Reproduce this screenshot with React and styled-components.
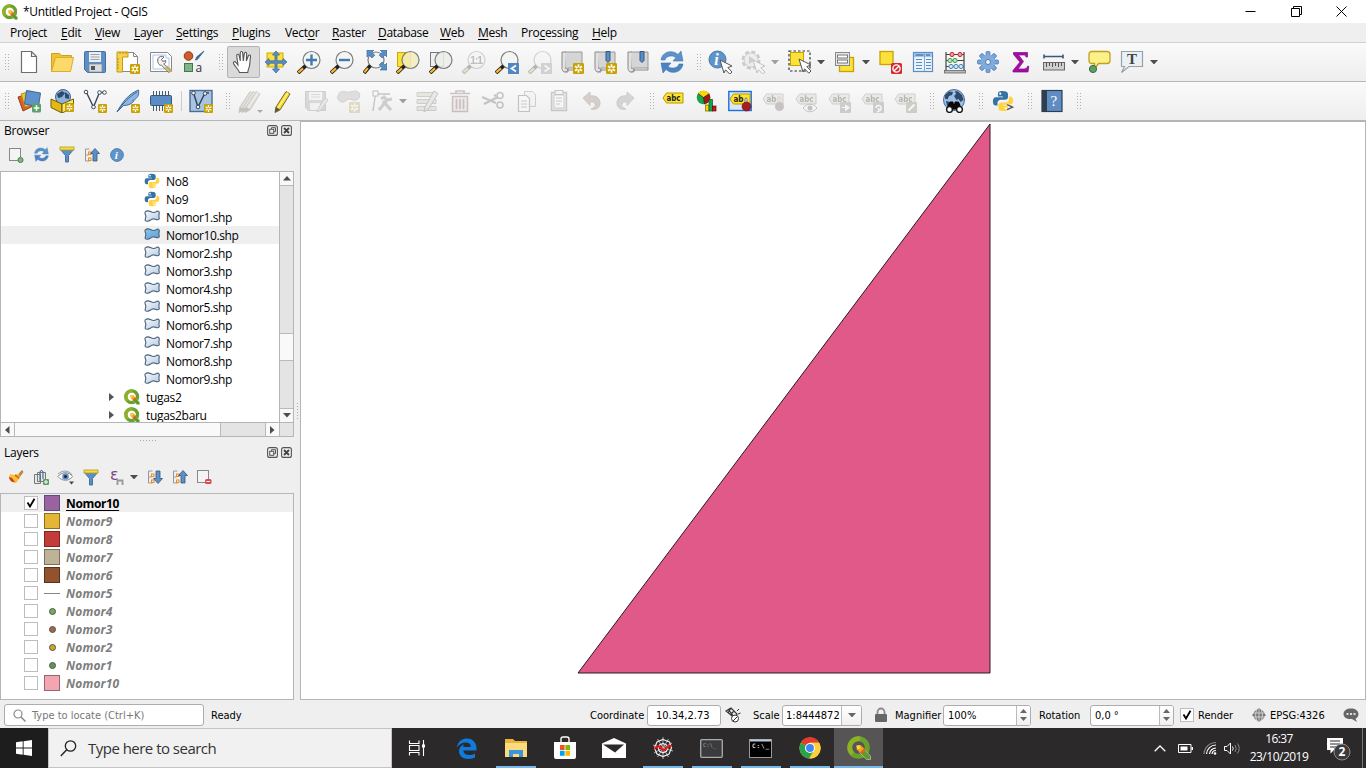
import React from 'react';
import styled, { createGlobalStyle, css } from 'styled-components';

const Global = createGlobalStyle`
  *{box-sizing:border-box}
  html,body{margin:0;padding:0;overflow:hidden;background:#efefef}
  body{font-family:"Open Sans","Noto Sans",sans-serif;font-size:12px;color:#000}
  svg{display:block;flex:none}
`;

/* ---------- frame ---------- */
const Window = styled.div`width:1366px;height:768px;display:flex;flex-direction:column;background:#efefef;overflow:hidden;`;
const TitleBar = styled.header`height:23px;flex:none;display:flex;align-items:center;background:#fff;padding-left:2px;gap:5px;`;
const Text = styled.span`
  white-space:pre;flex:none;display:block;
  width:${p => (p.$w ? p.$w + 'px' : 'auto')};
  letter-spacing:${p => p.$ls || 0}px;
  color:${p => p.$c || 'inherit'};
`;
const WindowButtons = styled.div`margin-left:auto;display:flex;gap:34.500px;padding-right:19px;align-items:center;`;
const MenuBar = styled.nav`height:19px;flex:none;display:flex;align-items:center;gap:14px;padding-left:10px;u{text-underline-offset:2px}`;
const ToolBar = styled.div`
  height:39px;flex:none;display:flex;align-items:center;padding-left:0;
  background:linear-gradient(#fafafa,#eeeeee);border-top:1px solid ${p => p.$top};
`;
const Slot = styled.div`
  width:${p => p.$w || 33}px;height:32px;flex:none;display:flex;align-items:center;justify-content:center;
  opacity:${p => (p.$off ? 0.3 : 1)};filter:${p => (p.$off ? 'grayscale(.5)' : 'none')};
  ${p => p.$on && css`background:#dadada;border:1px solid #b2b2b2;border-radius:2px;`}
`;
const GripBox = styled.div`width:${p => p.$w}px;flex:none;display:flex;justify-content:flex-end;padding-right:${p => p.$pr || 0}px;`;
const GripDots = styled.i`
  display:block;width:6px;height:17px;
  background:radial-gradient(circle at .5px .5px,#b0b0b0 .8px,transparent .9px) 0 0/3px 3px;
`;
const ArrowSlot = styled.div`width:${p => p.$w}px;padding-right:3px;flex:none;display:flex;justify-content:center;opacity:${p => (p.$off ? 0.5 : 1)};`;
const Body = styled.main`flex:1;min-height:0;display:flex;`;
const Docks = styled.aside`width:294px;flex:none;display:flex;flex-direction:column;`;
const TopRule = styled.div`height:1px;flex:none;background:#b5b5b5;`;
const Splitter = styled.div`
  width:6px;flex:none;display:flex;align-items:center;justify-content:center;padding-top:2px;border-top:1px solid #b5b5b5;
`;
const CanvasWrap = styled.div`flex:1;display:flex;border-top:1px solid #b5b5b5;`;
const Canvas = styled.section`flex:1;border:1px solid #b5b5b5;background:#fff;`;

/* ---------- docks ---------- */
const DockHead = styled.div`height:18px;flex:none;display:flex;align-items:center;padding:0 2px 0 4px;justify-content:space-between;`;
const DockButtons = styled.div`display:flex;gap:3px;`;
const DockTools = styled.div`height:32px;flex:none;display:flex;align-items:center;padding-left:3px;padding-bottom:${p => p.$pb || 0}px;`;
const Tree = styled.div`height:${p => p.$h}px;flex:none;border:1px solid #b5b5b5;background:#fff;display:flex;flex-direction:column;`;
const TreeTop = styled.div`display:flex;height:250px;flex:none;`;
const TreeRows = styled.div`flex:1;overflow:hidden;`;
const Row = styled.div`
  height:18px;display:flex;align-items:center;padding-left:${p => p.$pl}px;gap:${p => p.$gap || 5}px;
  background:${p => (p.$sel ? '#efefef' : 'transparent')};
`;
const Raised = styled.div`flex:none;padding-bottom:2px;`;
const Twisty = styled.i`border:4px solid transparent;border-left:5px solid #555;border-right:0;margin-right:5px;`;
const VBar = styled.div`width:14px;flex:none;border-left:1px solid #b5b5b5;background:#e4e4e4;display:flex;flex-direction:column;`;
const HBar = styled.div`height:14px;flex:none;border-top:1px solid #b5b5b5;background:#e4e4e4;display:flex;`;
const ScrollPart = styled.div`
  display:flex;align-items:center;justify-content:center;flex:none;
  background:${p => (p.$track ? '#e4e4e4' : '#f9f9f9')};
  ${p => (p.$v
    ? css`height:${p.$s}px;border-bottom:${p.$last ? 0 : 1}px solid #b9b9b9;`
    : css`width:${p.$s}px;border-right:${p.$last ? 0 : 1}px solid #b9b9b9;`)}
`;
const HSplit = styled.div`height:6px;flex:none;display:flex;align-items:center;justify-content:center;padding-left:3px;`;
const DotLine = styled.i`
  display:block;width:${p => (p.$v ? 1 : 17)}px;height:${p => (p.$v ? 17 : 1)}px;
  background:repeating-linear-gradient(${p => (p.$v ? '180deg' : '90deg')},#aaa 0 1px,transparent 1px 3px);
`;
const Check = styled.div`
  width:14px;height:14px;flex:none;background:#fff;border:1px solid #bdbdbd;display:flex;align-items:center;justify-content:center;
`;
const SymbolCell = styled.div`width:16px;height:18px;flex:none;display:flex;align-items:center;justify-content:center;margin:0 1px;`;
const Swatch = styled.i`width:16px;height:16px;background:${p => p.$c};border:1px solid ${p => p.$b};`;
const Dot = styled.i`width:7px;height:7px;border-radius:50%;background:${p => p.$c};border:1px solid #4f5a4c;`;
const LineSym = styled.i`width:16px;height:1px;background:#7d8b8f;`;
const LayerName = styled.span`
  font-weight:700;font-size:12px;line-height:18px;padding-top:1px;white-space:pre;letter-spacing:${p => (p.$on ? -0.35 : 0.15)}px;
  color:${p => (p.$on ? '#000' : '#7d7d7d')};font-style:${p => (p.$on ? 'normal' : 'italic')};
  text-decoration:${p => (p.$on ? 'underline' : 'none')};text-underline-offset:2px;
`;

/* ---------- status bar ---------- */
const StatusBar = styled.footer`
  height:28px;flex:none;display:flex;align-items:center;padding:2px 0 0 4px;
  font-family:"DejaVu Sans Condensed","DejaVu Sans",sans-serif;font-stretch:condensed;font-size:11px;
`;
const Field = styled.div`
  width:${p => p.$w}px;height:${p => p.$h || 21}px;flex:none;background:#fff;border:1px solid #adadad;border-radius:3px;
  display:flex;align-items:center;padding-left:${p => p.$pl || 4}px;overflow:hidden;
`;
const FieldEnd = styled.div`
  margin-left:auto;width:${p => p.$w}px;height:100%;border-left:1px solid #bbb;background:linear-gradient(#fff,#f0f0f0);
  display:flex;flex-direction:column;gap:4px;align-items:center;justify-content:center;
`;
const Lead = styled.div`margin-left:${p => p.$ml}px;flex:none;display:flex;`;

/* ---------- task bar ---------- */
const TaskBar = styled.footer`height:40px;flex:none;display:flex;background:#2c292b;color:#fff;`;
const Start = styled.div`width:48px;display:flex;align-items:center;justify-content:center;background:#1d1d1d;`;
const Search = styled.div`
  width:344px;background:#f1f1f1;border:1px solid #c4c4c4;display:flex;align-items:center;padding-left:11px;gap:11px;
  color:#333;font-size:15px;margin-right:1px;
`;
const Task = styled.div`
  width:49px;display:flex;align-items:center;justify-content:center;
  background:${p => (p.$active ? '#575456' : 'transparent')};
  box-shadow:${p => (p.$active ? 'inset 0 -2px #76b9ed' : 'none')};
  ${p => p.$run && css`background:linear-gradient(#76b9ed,#76b9ed) center bottom/40px 2px no-repeat;`}
`;
const Tray = styled.div`margin-left:auto;display:flex;align-items:center;padding-right:3px;`;
const Clock = styled.div`
  width:64px;margin:0 14px 0 6px;display:flex;flex-direction:column;align-items:center;line-height:18px;font-size:12px;padding-bottom:1px;
`;
const ShowDesk = styled.i`width:1px;height:40px;background:#7b797a;margin-left:11px;`;

/* ---------- icon helpers ---------- */
const I = ({ w = 24, h = w, vb, children, ...r }) => (
  <svg width={w} height={h} viewBox={vb || `0 0 ${w} ${h}`} fill="none" {...r}>{children}</svg>
);
const Tri = ({ d = 'down', w = 8, c = '#4d4d4d' }) => {
  const path = { down: 'M0 0h8L4 4.5z', up: 'M0 4.5h8L4 0z', left: 'M4.5 0v8L0 4z', right: 'M0 0v8l4.500-4z' }[d];
  const flat = d === 'down' || d === 'up';
  return <svg width={flat ? w : w * 0.6} height={flat ? w * 0.6 : w} viewBox={flat ? '0 0 8 4.800' : '0 0 4.800 8'}><path d={path} fill={c} /></svg>;
};
const Badge = ({ x = 14, y = 14, s = 10 }) => (
  <g transform={`translate(${x} ${y}) scale(${s / 10})`}>
    <rect width="10" height="10" rx="1.200" fill="#c9a200" />
    <path d="M5 1.200v7.600M1.800 3l6.400 4M8.200 3L1.800 7" stroke="#fff" strokeWidth="1.500" />
    <circle cx="5" cy="5" r="1.200" fill="#c9a200" />
  </g>
);
const Mag = ({ cx = 14.5, cy = 10, r = 8.5, fill = '#f2f4f2', children }) => (
  <>
    <circle cx={cx} cy={cy} r={r} fill={fill} fillOpacity=".85" stroke="#7c7c7c" strokeWidth="1.200" />
    <path d={`M${cx - r * 0.7} ${cy + r * 0.7}L1 23`} stroke="#222" strokeWidth="3.800" />
    <path d={`M${cx - r * 0.7 - 2.5} ${cy + r * 0.7 + 2.5}L1.400 22.400`} stroke="#fcb827" strokeWidth="2.200" />
    {children}
  </>
);
const Cursor = ({ x = 12, y = 9 }) => (
  <path transform={`translate(${x} ${y})`} d="M0 0l12 6-4.200 1.600 4.200 4.400-2.200 2.200-4.200-4.400L4 13z" fill="#fff" stroke="#555" />
);
const Tag = ({ t = 'abc', y = 6, fill = '#ffe62e', stroke = '#b99600' }) => (
  <>
    <path d={`M2 ${y + 5}l3.500-5H22v10H5.500z`} fill={fill} stroke={stroke} />
    <text x="5.500" y={y + 8} fontSize="8" fontWeight="700" fontFamily="DejaVu Sans" fill="#222" textLength={t === 'abc' ? 14 : 10} lengthAdjust="spacingAndGlyphs">{t}</text>
  </>
);
const Scroll = () => (
  <>
    <path d="M4 2h17v16H7v4H4z" fill="#d5d5d5" stroke="#999" />
    <path d="M4 18c4 0 3 4 0 4-3 0-3-4-3-4V2h4" fill="#e2e2e2" stroke="#888" />
    <path d="M6 20h15v-2" stroke="#888" />
  </>
);
const Pencil = ({ c = '#f3d92f', x = 0 }) => (
  <g transform={`translate(${x} 0)`}>
    <path d="M5 18L15 2.500l4 2.500L9 21l-5 2.500z" fill={c} stroke="#7c6a20" />
    <path d="M7 19L17 3.600" stroke="#fff7a0" strokeWidth="1.200" />
    <path d="M4.800 18L4 23.500l5-3z" fill="#555" />
  </g>
);
const Python = ({ s = 16, prompt }) => (
  <I w={s} vb="0 0 24 24">
    <path d="M11.500 1c-5 0-5 2-5 3.500V7H12v1H4C2 8 1 10 1 12.500S2 17 4 17h2v-3c0-2 1.500-3.500 3.500-3.500h5c1.500 0 3-1.200 3-3v-3C17.500 2 15 1 11.500 1z" fill="#3673a5" />
    <path d="M12.500 23c5 0 5-2 5-3.500V17H12v-1h8c2 0 3-2 3-4.500S22 7 20 7h-1.500v3c0 2-1.500 3.500-3.500 3.500h-5c-1.500 0-3 1.200-3 3v3c0 2.500 2 3.500 5.500 3.500z" fill="#ffd23e" />
    <circle cx="9" cy="4" r="1.200" fill="#fff" /><circle cx="15" cy="20" r="1.200" fill="#fff" />
    {prompt && <path d="M16.500 16l6 2.700-6 2.700" stroke="#f2f2f2" strokeWidth="3.200" />}
    {prompt && <path d="M16.500 16l6 2.700-6 2.700" stroke="#555" strokeWidth="1.500" />}
  </I>
);
const QLogo = ({ s = 16 }) => (
  <I w={s} vb="0 0 24 24">
    <circle cx="11.500" cy="11.500" r="8.800" stroke="#6aa02c" strokeWidth="5" />
    <path d="M5.500 18a8.800 8.800 0 0 1 0-12.800A8.800 8.800 0 0 1 13 2.800" stroke="#8fb128" strokeWidth="4.600" />
    <path d="M12.500 16.500l3.800-4.200 7.200 7.700v3.500h-4z" fill="#5c9a30" stroke="#fff" strokeOpacity=".5" strokeWidth=".8" />
    <path d="M9.500 9.500l4-.4 3.600 3.300-4.200 4.200-3.200-3.400z" fill="#f5a21b" />
    <path d="M9.500 9.500l3.200 0 1 3-3.600.5z" fill="#fbd34a" />
    <path d="M12.900 16.600l4.200-4.200 1.600 1.700-4.200 4.200z" fill="#e5621a" />
  </I>
);
const Shp = ({ blue }) => (
  <I w={16} h={12}>
    <defs>
      <linearGradient id={blue ? 'shpB' : 'shpW'} x1="0" y1="0" x2="1" y2="1">
        <stop offset="0" stopColor={blue ? '#8cc4ec' : '#f6f8fa'} /><stop offset="1" stopColor={blue ? '#5c9fd6' : '#b4cbe4'} />
      </linearGradient>
    </defs>
    <path d="M1.300 1.800C3 .4 5 .8 7 1.800s3.800 1.100 5.600-.5c2-.6 3 .4 2.600 2.400S14.700 6.800 15.300 8.300c-.3 1.900-2.300 1.700-3.900 1S8 8.500 6.200 10.300c-1.700 1.200-4.200 1.300-5 .2-.3-1.600.8-3 .6-4.500S.3 3.200 1.300 1.800z" fill={`url(#${blue ? 'shpB' : 'shpW'})`} stroke="#4a6078" strokeWidth="1.100" />
  </I>
);
const Refresh = ({ s = 24 }) => (
  <I w={s} vb="0 0 24 24">
    <path d="M1 10C2 3 9 0 15 2.500l3 2L21 1l2 10H13l3-3.500C12 4.500 6 6 5 10z" fill="#5a93cc" stroke="#3f76b0" strokeWidth=".6" />
    <path d="M23 14c-1 7-8 10-14 7.500l-3-2L3 23 1 13h10l-3 3.500c4 3 10 1.500 11-2.500z" fill="#4b84c2" stroke="#3f76b0" strokeWidth=".6" />
  </I>
);
const Funnel = () => (
  <I w={16} h={17}>
    <path d="M1 3l5.500 6.500V16h3V9.500L15 3z" fill="#5b8fc6" stroke="#44729f" />
    <rect x="1" y="1" width="14" height="3" fill="#f5dc3c" stroke="#b59f1c" strokeWidth=".8" />
  </I>
);
const Info = ({ s = 14 }) => (
  <I w={s} vb="0 0 16 16">
    <circle cx="8" cy="8" r="7.300" fill="#5f94cb" stroke="#4a78a8" />
    <text x="5.400" y="12.500" fontSize="13" fontStyle="italic" fontWeight="700" fontFamily="Liberation Serif" fill="#fff">i</text>
  </I>
);
const Collapse = ({ down }) => (
  <I w={16}>
    <path d="M5.500 2H1.500v12h4M1.500 8h3" stroke="#999" />
    <rect x="4.500" y="5" width="2.500" height="2.500" stroke="#f08a1c" /><rect x="4.500" y="11" width="2.500" height="2.500" stroke="#f08a1c" />
    <path transform={down ? 'rotate(180 11 8)' : undefined} d="M11 1.500l4.500 5H13V14H9V6.500H6.500z" fill="#5b8fc6" stroke="#31587f" strokeWidth=".8" />
  </I>
);
const Globe = ({ dark = '#2c4a6d', sea = '#9dbfe4', s = 24, children }) => (
  <I w={s} vb="0 0 24 24">
    <circle cx="12" cy="11" r="10.500" fill={sea} stroke="#4a6d94" />
    <path d="M3 6l4-3.500 4 .5-1 3-3 1-1.500 3.500-2.500-1zM13 2l3 .5 4 3.500 1.500 5-3 2-2-3-2 1-2.500-4 2-2zM4 12l4 1 2 3-2 3-3-2z" fill={dark} />
    {children}
  </I>
);

/* ---------- toolbar icons ---------- */
const ic = {
  newp: <I><path d="M4.500 1.500h10l5 5v16h-15zM14.500 1.500v5h5" fill="#fff" stroke="#6d6d6d" strokeWidth="1.200" /></I>,
  open: <I><path d="M1.500 3.500h8l2 2h10v4H5l-3.500 12z" fill="#eec232" stroke="#d0a11c" /><path d="M5.500 7.500h18l-3 14H1.500z" fill="#fcd968" stroke="#d9ae2b" /></I>,
  save: <I><path d="M2.500 1.500h19q1 0 1 1v19q0 1-1 1h-17l-3-3v-17q0-1 1-1z" fill="#5d8fc6" stroke="#446e9d" /><rect x="6" y="2" width="12" height="10" fill="#eceff1" /><path d="M7.500 4.500h9M7.500 7h9M7.500 9.500h9" stroke="#9aa4ad" /><rect x="6" y="14" width="13" height="8" fill="#d8dde1" stroke="#7b8791" strokeWidth=".7" /><rect x="8" y="16" width="4" height="4" fill="#555" /></I>,
  layout: <I><path d="M2.500 2.500h15l4 4v15h-19z" fill="#fff" stroke="#888" /><path d="M17.500 2.500v4h4" stroke="#888" /><path d="M1 2h11v5H6.500v15H1z" fill="#f7d24e" stroke="#c79c11" /><path d="M4 2v2M7 2v2M10 2v2M1 9h2M1 12h2M1 15h2M1 18h2" stroke="#a07d08" strokeWidth=".8" /><Badge /></I>,
  manager: <I><path d="M1.500 2.500h17l4 4v15h-21z" fill="#fff" stroke="#888" /><path d="M4 5h13v3h3v11H4z" stroke="#a9c5ea" /><path d="M9 8.500a4.200 4.200 0 0 1 6-1.500l-2.500 2.500 1.200 2 3-1c.3 2-.7 3.200-2 3.500l7.300 6.500-2 2-7.500-7.200c-2.500.3-4.500-2.800-3.500-6.800z" fill="#f3f3f3" stroke="#666" /><path d="M17 16.500l5.500 5" stroke="#c9ab54" strokeWidth="3" /></I>,
  style: <I><circle cx="6.500" cy="6" r="4.300" fill="#cf5b2d" stroke="#8d3414" /><path d="M13.500 10c2-.3 2.500-1 3-2l5.500-7-6 5c-2 .5-1.500 2.500-2.500 4z" fill="#3d6a9a" stroke="#3d6a9a" /><rect x="2.500" y="13.500" width="8" height="8" fill="#7fb48a" stroke="#3f7a4c" /><text x="13.500" y="21.500" fontSize="12" fontFamily="Open Sans" fill="#333">a</text></I>,
  pan: <I><path d="M8.500 22.500c-1-3-4.500-6-6-9-.6-2 1.200-2.500 2.500-1l2 2.500L5.700 6c0-2.200 2-2.200 2.500-.2L9.300 11 9.200 3c.2-2 2.300-2 2.500 0l.6 8 1-7.500c.5-2 2.500-1.500 2.400.3L15.300 11l2-5c.8-1.700 2.500-1 2.200.8-.6 3.500-.5 6-1 9-.4 2.500-1.700 4-1.700 6.700z" fill="#fff" stroke="#555" strokeWidth="1.100" /></I>,
  pansel: <I><rect x="3" y="3" width="16" height="14" fill="#fbe23b" stroke="#d2a800" /><path d="M12 1l3.500 4H13v5.800h6V8.500l4 3.500-4 3.500v-2.300h-6V19h2.500L12 23l-3.500-4H11v-5.800H5v2.300L1 12l4-3.500v2.300h6V5H8.500z" fill="#5a8dc6" stroke="#41709f" strokeWidth=".8" /></I>,
  zin: <I><Mag><path d="M14.500 4.500v11M9 10h11" stroke="#4379b3" strokeWidth="2.400" /></Mag></I>,
  zout: <I><Mag><path d="M9 10h11" stroke="#4379b3" strokeWidth="2.400" /></Mag></I>,
  zfull: <I><Mag cx={13} cy={10} r={8}><path d="M4 0h7L8.800 2.200l3 3-2.800 2.800-3-3L4 7zM24 0h-7l2.200 2.200-3 3L19 8l3-3 2 2zM24 20h-7l2.200-2.200-3-3L19 12l3 3 2-2z" fill="#5a8dc6" stroke="#41709f" strokeWidth=".7" /></Mag></I>,
  zsel: <I><rect x="1.500" y="2.500" width="13" height="14" fill="#fbe23b" stroke="#d2a800" /><Mag fill="#f1ecc0" /></I>,
  zlayer: <I><rect x="1.500" y="2.500" width="13" height="14" fill="#f0f0f0" stroke="#777" /><Mag fill="#ebede8" /></I>,
  znat: <I><Mag><text x="8" y="14" fontSize="11" fontWeight="700" fontFamily="Liberation Sans" fill="#444" textLength="13">1:1</text></Mag></I>,
  zlast: <I><Mag /><rect x="13" y="13" width="11" height="11" fill="#4f87c3" /><path d="M21 15.500l-4.500 3 4.500 3" stroke="#fff" strokeWidth="1.800" /></I>,
  znext: <I><Mag /><rect x="13" y="13" width="11" height="11" fill="#888" /><path d="M16.500 15.500l4.500 3-4.500 3" stroke="#fff" strokeWidth="1.800" /></I>,
  book: <I><Scroll /><Badge x={12} y={13} s={11} /></I>,
  book2: <I><Scroll /><path d="M12 1.500h4v9l-2 2-2-2z" fill="#5a8dc6" stroke="#31587f" /><Badge x={12} y={13} s={11} /></I>,
  book3: <I><Scroll /><path d="M13 1.500h4v9l-2 2-2-2z" fill="#5a8dc6" stroke="#31587f" /></I>,
  ident: <I><circle cx="9.500" cy="9.500" r="8.500" fill="#5f94cb" stroke="#4a78a8" /><text x="6.200" y="15" fontSize="16" fontStyle="italic" fontWeight="700" fontFamily="Liberation Serif" fill="#fff">i</text><Cursor x={12} y={10} /></I>,
  action: <I><circle cx="10" cy="10" r="8" stroke="#666" strokeWidth="3" strokeDasharray="4 2.300" /><circle cx="10" cy="10" r="7" fill="#ddd" stroke="#777" /><path d="M8 6l6 4-6 4z" fill="#777" /><Cursor x={12} y={10} /></I>,
  select: <I><rect x="1" y="1" width="21" height="20" stroke="#333" strokeDasharray="2.500 2" strokeWidth="1.200" /><rect x="2.500" y="2.500" width="13" height="13" fill="#fbe23b" stroke="#c9a200" /><Cursor x={11} y={9} /></I>,
  selval: <I w={23} h={24}><rect x="5.500" y="7.500" width="14" height="14" fill="#fbe23b" stroke="#c9a200" strokeWidth="1.300" /><rect x="1.500" y="2.500" width="14" height="13" fill="#e8e8e8" stroke="#888" /><rect x="3.500" y="5" width="10" height="3" fill="#fff" stroke="#777" /><rect x="3.500" y="10" width="10" height="3" fill="#fff" stroke="#777" /></I>,
  desel: <I><rect x="2" y="1.500" width="13" height="13" fill="#fbe23b" stroke="#c9a200" strokeWidth="1.300" /><rect x="13" y="13" width="11" height="11" rx="1.500" fill="#d7282f" /><circle cx="18.500" cy="18.500" r="3.600" stroke="#fff" strokeWidth="1.400" /><path d="M21 16l-5 5" stroke="#fff" strokeWidth="1.400" /></I>,
  table: <I><rect x="2.500" y="2.500" width="19" height="19" fill="#eaf2fa" stroke="#5a8dc6" strokeWidth="1.200" /><rect x="3" y="3" width="18" height="4" fill="#a4c5e8" /><path d="M4.500 5h8M15 5h4" stroke="#4a7db6" strokeWidth="1.400" /><path d="M13.500 3v18" stroke="#7faad6" /><path d="M5 9.500h6M5 12.500h6M5 15.500h6M5 18.500h6M15 9.500h5M15 12.500h5M15 15.500h5M15 18.500h5" stroke="#5a8dc6" /></I>,
  abacus: <I><path d="M3 2v19M21 2v19M3 4.500h18M3 10.500h18M3 16.500h18" stroke="#444" strokeWidth="1.200" /><rect x="1.500" y="20.500" width="21" height="2.500" fill="#bbb" stroke="#666" strokeWidth=".8" />{[[9, 4.5, '#f09a9a', '#c0282c'], [17, 4.5, '#f09a9a', '#c0282c'], [7, 10.5, '#bfe3bf', '#3c9c48'], [12, 10.5, '#bfe3bf', '#3c9c48'], [8, 16.5, '#d2e6f6', '#4382b5'], [13, 16.5, '#d2e6f6', '#4382b5'], [18, 16.5, '#d2e6f6', '#4382b5']].map(([x, y, f, s], i) => <circle key={i} cx={x} cy={y} r="2.100" fill={f} stroke={s} />)}</I>,
  gear: <I>{[0, 45, 90, 135].map(a => <rect key={a} x="10" y="1.500" width="4" height="21" rx="1" transform={`rotate(${a} 12 12)`} fill="#7aa5d8" stroke="#4a7db6" strokeWidth=".8" />)}<circle cx="12" cy="12" r="7" fill="#82abdc" /><circle cx="12" cy="12" r="2.500" fill="#f4f4f4" stroke="#4a7db6" /></I>,
  sigma: <I><path d="M4.500 2.500h14v4.500h-1.500c-.3-1.700-1-2-2.500-2H9.500l5 6.500-5.500 7.500h6c2 0 3-.8 3.500-2.700h1.300l-.8 5.700H4v-1.500l7-8.500-6.500-7.500z" fill="#a70ca7" stroke="#7e087e" strokeWidth=".7" /></I>,
  ruler: <I><path d="M2 6.500h19M2 4.500v4M21 4.500v4" stroke="#36597f" strokeWidth="1.600" /><rect x="1.500" y="12.500" width="21" height="7.500" fill="#cfcfcf" stroke="#666" /><path d="M4.500 13v4M7.500 13v3M10.500 13v4M13.500 13v3M16.500 13v4M19.500 13v3" stroke="#555" /></I>,
  tip: <I><path d="M5 1.500h15q3 0 3 3v6q0 3-3 3h-8.500l-4 5.500v-5.500H5q-3 0-3-3v-6q0-3 3-3z" fill="#fcf08b" stroke="#c3a01a" strokeWidth="1.300" /><circle cx="6" cy="19" r="3.600" fill="#5f9e67" stroke="#3d6b43" /></I>,
  text: <I><path d="M1.500 1.500h21v15H9l-7.500 6 3-6h-3z" fill="#e9f1f6" stroke="#9aa1a6" strokeWidth="1.200" /><text x="7" y="14" fontSize="15" fontFamily="Liberation Serif" fontWeight="700" fill="#444">T</text></I>,

  dsm: <I><path d="M1 8l10-3 5 12-10 5z" fill="#d9622c" stroke="#9c3d12" /><path d="M4 5l10-3 4 13-10 3z" fill="#f0c431" stroke="#b98f0f" /><path d="M9.500 1.500l14 2.500-2 13.500-14-2.500z" fill="#5f92ca" stroke="#3c6797" /><rect x="15" y="14.500" width="9" height="9" rx="1.500" fill="#5aa06a" /><path d="M19.500 16.200v5.600M16.700 19h5.600" stroke="#fff" strokeWidth="1.600" /></I>,
  geo: <I><circle cx="13" cy="8" r="7.500" fill="#8db2dc" stroke="#3f648d" /><path d="M7 5l5-3 3 2-3 4-4 1zM15 3l4 3v4l-4-1z" fill="#2c4a6d" /><path d="M1 10l11 5v9L1 18.500z" fill="#e3b912" stroke="#6f5a06" /><path d="M12 15l11.500-5v8.500L12 24z" fill="#fbe96e" stroke="#6f5a06" /><Badge x={15} y={14} s={9} /></I>,
  vnew: <I><path d="M3.500 3.500L10.500 18l6-14.500h5" stroke="#3a4a5c" strokeWidth="1.400" /><g fill="#fff" stroke="#3a4a5c"><circle cx="3" cy="3" r="1.800" /><circle cx="10.500" cy="18" r="1.800" /><circle cx="16.500" cy="3.500" r="1.800" /><circle cx="21.500" cy="3.500" r="1.800" /></g><Badge x={15} y={15} s={9} /></I>,
  feather: <I><path d="M1 23C6 14 12 5 22.500 1c1 6-2 8-4 10l-2 .5 1 1c-3 3-6 4-10 4z" fill="#8db6e2" stroke="#3e6a9a" /><path d="M1 23C7 14 13 8 21 3" stroke="#3e6a9a" /><Badge x={15} y={15} s={9} /></I>,
  chip: <I><path d="M4.500 2v20M7.500 2v20M10.500 2v20M13.500 2v20M16.500 2v20M19.500 2v20" stroke="#4c5a68" /><rect x="1.500" y="6.500" width="21" height="10" rx="1" fill="#5a8dc6" stroke="#31587f" /><Badge x={15} y={15} s={9} /></I>,
  virt: <I><rect x="1" y="1.500" width="22" height="21" fill="#a9c4e2" stroke="#4c6d92" strokeWidth="1.400" /><path d="M4.500 4L9 18l7-14h4" stroke="#33485f" strokeWidth="1.500" /><g fill="#fff" stroke="#33485f"><circle cx="4.500" cy="4" r="1.800" /><circle cx="9" cy="18" r="1.800" /><circle cx="16" cy="4.500" r="1.800" /></g><Badge x={15} y={15} s={9} /></I>,
  pencils: <I w={26} h={24}><Pencil x={-3} c="#999" /><Pencil x={0} c="#aaa" /><Pencil x={3} c="#aaa" /><path d="M19 21h6l-3 3z" fill="#111" /></I>,
  pencil: <I><Pencil /></I>,
  saveedit: <I><path d="M1.500 2.500h20v19h-17l-3-3z" fill="#9a9a9a" stroke="#777" /><rect x="5" y="3" width="13" height="8" fill="#f1f1f1" /><path d="M7 5.500h9M7 8h9" stroke="#999" /><rect x="6" y="14" width="10" height="7" fill="#eee" /><path d="M14 20l7-11 3 2-7 10-4 2z" fill="#ccc" stroke="#777" /></I>,
  addpoly: <I><path d="M1 7c1-5 5-5 8-4s7-1 10-1c5 1 5 8 0 9-3 1-4-1-7-1s-3 3-6 3c-4 0-6-3-5-6z" fill="#aaa" stroke="#777" /><Badge x={12} y={13} s={11} /></I>,
  vertex: <I><path d="M3 22L5.500 5H20" stroke="#555" strokeWidth="1.300" /><rect x="3" y="2" width="5" height="5" fill="#fff" stroke="#444" /><path d="M9 21l9-11M11 10l3-2 3 3 5-1M13 12l8 9" stroke="#777" strokeWidth="3" /></I>,
  modify: <I><path d="M2 3.500h19v4H2zM2 10.500h19v4H2zM2 17.500h19v4H2z" fill="#cfc488" stroke="#777" /><path d="M10 18L19 2l4 2.500L13.500 20l-4.500 3z" fill="#ccc" stroke="#555" /></I>,
  trash: <I><path d="M4.500 7.500h15v15h-15z" fill="#e9cfcf" stroke="#8c4444" strokeWidth="1.500" /><path d="M2 4.500h20M8 4V2h8v2M8.500 10v10M12 10v10M15.500 10v10" stroke="#8c4444" strokeWidth="1.700" /></I>,
  cut: <I><path d="M1 8l14 6M3 15l14-7M13 6l2 1" stroke="#555" strokeWidth="2" /><circle cx="19" cy="6.500" r="3" stroke="#555" strokeWidth="1.600" /><circle cx="19" cy="16" r="3" stroke="#555" strokeWidth="1.600" /></I>,
  copy: <I><path d="M10.500 2.500h8l3 3v12h-11z" fill="#eee" stroke="#777" /><path d="M4.500 6.500h8l3 3v13h-11z" fill="#fff" stroke="#555" strokeWidth="1.200" /><path d="M7 12h6M7 15h6M7 18h6" stroke="#666" /></I>,
  paste: <I><path d="M4.500 3.500h15v18h-15z" fill="#ccc" stroke="#666" strokeWidth="1.500" /><path d="M7 6h10v13H7z" fill="#fff" stroke="#777" /><rect x="8" y="1.500" width="8" height="4" fill="#eee" stroke="#555" /><path d="M9 9h6M9 12h6M9 15h4" stroke="#666" /></I>,
  undo: <I><path d="M3 9l7-6v4c7-1 10 3 10 7 0 5-4 7-9 6 3-1 5-3 4-5-.6-2-2-2.500-5-2v3.500z" fill="#a2775f" stroke="#7e5942" /></I>,
  redo: <I><path d="M21 9l-7-6v4C7 6 4 10 4 14c0 5 4 7 9 6-3-1-5-3-4-5 .6-2 2-2.500 5-2v3.500z" fill="#80957f" stroke="#5f755e" /></I>,
  abc: <I><Tag y={4} /></I>,
  pie: <I><circle cx="8.500" cy="8.500" r="6.800" fill="#19a34a" /><path d="M8.500 8.500L3 4.500a6.800 6.800 0 0 1 11.200.5z" fill="#ffd500" /><path d="M8.500 8.500L14.200 4.800a6.800 6.800 0 0 1-4.500 10.400z" fill="#a31616" /><path d="M8.500 8.500L3 4.500M8.500 8.500l5.700-3.700M8.500 8.500l1 6.700" stroke="#222" strokeWidth=".7" /><rect x="10.500" y="16" width="3.500" height="6" fill="#ffd500" stroke="#7d6900" strokeWidth=".7" /><rect x="14" y="10.500" width="3.500" height="11.500" fill="#19a34a" stroke="#0d5626" strokeWidth=".7" /><rect x="17.500" y="17" width="3.500" height="5" fill="#c41c1c" stroke="#5f0d0d" strokeWidth=".7" /></I>,
  hilite: <I><rect x=".8" y="2.500" width="22.400" height="19" fill="#dbe7f6" stroke="#1a6fe0" strokeWidth="1.400" /><Tag y={5} t="ab" /><path d="M17 15V9.500q1-1.500 2 0V15" fill="#fff" stroke="#777" /><circle cx="18.500" cy="17.500" r="4.500" fill="#a31f1f" stroke="#6e1010" strokeWidth=".6" /></I>,
  pin: <I><Tag y={5} t="ab" fill="#d5cfae" stroke="#777" /><path d="M17 15V8.500q1-1.500 2 0V15" fill="#fff" stroke="#777" /><circle cx="18.500" cy="17.500" r="4.500" fill="#7c4f4f" /></I>,
  show: <I><Tag y={5} fill="#d5cfae" stroke="#777" /><path d="M9 19c4-5 10-5 14 0-4 5-10 5-14 0z" fill="#fff" stroke="#555" /><circle cx="16" cy="19" r="2.500" fill="#456" /></I>,
  move: <I><Tag y={5} fill="#d5cfae" stroke="#777" /><rect x="13" y="13" width="11" height="11" rx="1" fill="#777" /><path d="M14.500 18.500h4V16l4 2.700-4 2.800v-3" fill="#fff" stroke="#fff" /></I>,
  rot: <I><Tag y={5} fill="#d5cfae" stroke="#777" /><rect x="13" y="13" width="11" height="11" rx="1" fill="#777" /><path d="M16 19a2.600 2.600 0 1 1 3.500 2.500M17 23l3-1.500-2-2" stroke="#fff" strokeWidth="1.500" /></I>,
  chg: <I><Tag y={5} fill="#d5cfae" stroke="#777" /><rect x="13" y="13" width="11" height="11" rx="1" fill="#807a50" /><path d="M15.500 21.500l6-6" stroke="#fff" strokeWidth="2" /></I>,
  meta: <Globe><path d="M5 20l3-7h3v2h2v-2h3.500l3 7z" fill="#0a0a0a" stroke="#000" /><circle cx="7.500" cy="20.500" r="2.900" fill="#fff" stroke="#111" strokeWidth="1.400" /><circle cx="17.500" cy="20.500" r="2.900" fill="#fff" stroke="#111" strokeWidth="1.400" /></Globe>,
  help: <I><rect x="2" y="1.500" width="20" height="21" fill="#5f8dc3" stroke="#2c3e50" strokeWidth="1.200" /><rect x="2" y="1.500" width="5" height="21" fill="#2c3e50" /><text x="10.500" y="17" fontSize="15" fontFamily="Liberation Serif" fill="#fff">?</text></I>,
};

/* a name ending in "!" is a disabled tool */
const Tool = ({ name, on, w }) => {
  const off = name.endsWith('!');
  return <Slot $off={off} $on={on} $w={w}>{ic[off ? name.slice(0, -1) : name]}</Slot>;
};
const Grip = ({ w, pr }) => <GripBox $w={w} $pr={pr}><GripDots /></GripBox>;
const Drop = ({ w, off }) => <ArrowSlot $w={w} $off={off}><Tri w={8} /></ArrowSlot>;
const Tools = ({ names }) => names.split(' ').map(n => <Tool key={n} name={n} />);

const menus = [['Pro|j|ect', 37], ['|E|dit', 20], ['|V|iew', 25], ['|L|ayer', 28], ['|S|ettings', 42], ['|P|lugins', 39], ['Vect|o|r', 33], ['|R|aster', 32], ['|D|atabase', 48], ['|W|eb', 24], ['|M|esh', 29], ['Pro|c|essing', 57], ['|H|elp', 26]];

const files = ['Nomor1', 'Nomor10', 'Nomor2', 'Nomor3', 'Nomor4', 'Nomor5', 'Nomor6', 'Nomor7', 'Nomor8', 'Nomor9'];
const layers = [
  ['Nomor10', <Swatch $c="#9b62a2" $b="#5a4c78" />, true], ['Nomor9', <Swatch $c="#e5b636" $b="#8d6f22" />], ['Nomor8', <Swatch $c="#c43c39" $b="#7b2624" />],
  ['Nomor7', <Swatch $c="#beb297" $b="#777060" />], ['Nomor6', <Swatch $c="#91522d" $b="#57311b" />], ['Nomor5', <LineSym />],
  ['Nomor4', <Dot $c="#74ab5c" />], ['Nomor3', <Dot $c="#a3654a" />], ['Nomor2', <Dot $c="#d1a42c" />], ['Nomor1', <Dot $c="#63935b" />],
  ['Nomor10', <Swatch $c="#f3a6b2" $b="#98666e" />],
];

const DockHeader = ({ title, ls }) => (
  <DockHead>
    <Text $ls={ls}>{title}</Text>
    <DockButtons>
      <I w={11}><rect x=".6" y=".6" width="9.800" height="9.800" rx="2" stroke="#555" strokeWidth="1.100" /><rect x="2.700" y="4.300" width="4" height="4" stroke="#555" /><path d="M4.500 4V2.700h4v4H7" stroke="#555" /></I>
      <I w={11}><rect x=".6" y=".6" width="9.800" height="9.800" rx="2" stroke="#555" strokeWidth="1.100" /><path d="M3 3l5 5M8 3L3 8" stroke="#444" strokeWidth="1.900" /></I>
    </DockButtons>
  </DockHead>
);

const BrowserPanel = () => (
  <>
    <DockHeader title="Browser" ls={-0.2} />
    <DockTools $pb={1}>
      <Slot $w={25}><I w={16}><rect x="1.500" y="1.500" width="11" height="12" fill="#f4f4f4" stroke="#888" /><circle cx="12.500" cy="13" r="2.600" fill="#7db386" stroke="#4a8a57" /></I></Slot>
      <Slot $w={26}><Refresh s={15} /></Slot>
      <Slot $w={25}><Funnel /></Slot>
      <Slot $w={26}><Collapse /></Slot>
      <Slot $w={24}><Info s={14} /></Slot>
    </DockTools>
    <Tree $h={266}>
      <TreeTop>
        <TreeRows>
          {['No8', 'No9'].map(n => <Row key={n} $pl={143} $gap={6}><Python s={16} /><Text $ls={-0.3}>{n}</Text></Row>)}
          {files.map((n, i) => <Row key={n} $pl={143} $gap={6} $sel={i === 1}><Raised><Shp blue={i === 1} /></Raised><Text $ls={-0.4}>{n}.shp</Text></Row>)}
          {['tugas2', 'tugas2baru'].map(n => <Row key={n} $pl={108}><Twisty /><QLogo s={16} /><Lead $ml={1}><Text $ls={-0.3}>{n}</Text></Lead></Row>)}
        </TreeRows>
        <VBar>
          <ScrollPart $v $s={14}><Tri d="up" w={8} /></ScrollPart>
          <ScrollPart $v $s={148} $track />
          <ScrollPart $v $s={27} />
          <ScrollPart $v $s={48} $track />
          <ScrollPart $v $s={13} $last><Tri w={8} /></ScrollPart>
        </VBar>
      </TreeTop>
      <HBar>
        <ScrollPart $s={14}><Tri d="left" w={8} /></ScrollPart>
        <ScrollPart $s={206} />
        <ScrollPart $s={45} $track />
        <ScrollPart $s={14}><Tri d="right" w={8} /></ScrollPart>
      </HBar>
    </Tree>
  </>
);

const LayersPanel = () => (
  <>
    <DockHeader title="Layers" ls={-0.25} />
    <DockTools>
      <Slot $w={25}><I w={16}><path d="M9 7l5-5.500L15 3l-4 5.500z" fill="#c8912b" stroke="#94691a" strokeWidth=".7" /><path d="M2 5l4 1 5-1 1 4-4 5c-4 0-6-3-7-6z" fill="#f4c430" /><path d="M1 8l3 1 3 4H5C3 13 1 10 1 8z" fill="#d23b2b" /><path d="M7 6l4 3" stroke="#e0662c" strokeWidth="2" /></I></Slot>
      <Slot $w={26}><I w={16}><path d="M1.500 5.500h6v9h-6zM4.500 3.500h8v9h-8z" fill="#e8e8e8" stroke="#777" /><path d="M7 12V3q1.500-3 3 0v7" stroke="#4a6f96" strokeWidth="1.200" /><rect x="10" y="10" width="6" height="6" rx="1" fill="#5f9e67" /><path d="M13 11v4M11 13h4" stroke="#fff" /></I></Slot>
      <Slot $w={24}><I w={18} h={16}><path d="M1 7.500C4 3 12 2 15.500 7.500 12 12.500 5 12.500 1 7.500z" fill="#fff" stroke="#888" /><path d="M1 5c4-4 11-4 14 1" stroke="#999" /><circle cx="8.500" cy="7.500" r="3.300" fill="#5b8fc6" /><circle cx="8.500" cy="7.500" r="1.500" fill="#223" /><path d="M12 12.500h5l-2.500 3z" fill="#444" /></I></Slot>
      <Slot $w={25}><Funnel /></Slot>
      <Slot $w={27}><I w={18} h={28}><text x="2" y="17" fontSize="16" fontFamily="DejaVu Sans" fill="#7d4b80">ε</text><path d="M9.500 22v-4.500h5V22" stroke="#999" strokeWidth="1.800" /></I></Slot>
      <Drop w={11} />
      <Slot $w={27}><Collapse down /></Slot>
      <Slot $w={23}><Collapse /></Slot>
      <Slot $w={25}><I w={16}><rect x="1.500" y="1.500" width="11" height="12" fill="#f4f4f4" stroke="#888" /><rect x="9" y="10" width="6.500" height="5" rx="1.500" fill="#e14a4a" /><path d="M10.500 12.500h3.500" stroke="#fff" /></I></Slot>
    </DockTools>
    <Tree $h={207}>
      {layers.map(([n, sym, on], i) => (
        <Row key={i} $pl={23} $sel={on}>
          <Check>{on && <I w={10}><path d="M1.500 4.500L4 8.500 8.500.8" stroke="#000" strokeWidth="1.800" /></I>}</Check>
          <SymbolCell>{sym}</SymbolCell>
          <LayerName $on={on}>{n}</LayerName>
        </Row>
      ))}
    </Tree>
  </>
);

const Spin = () => <FieldEnd $w={14}><Tri d="up" w={7} c="#666" /><Tri w={7} c="#666" /></FieldEnd>;
const gray = '#7b7b7b';

export default function App() {
  return (
    <Window>
      <Global />
      <TitleBar>
        <QLogo s={16} />
        <Text $ls={-0.3}>*Untitled Project - QGIS</Text>
        <WindowButtons>
          <I w={11}><path d="M.5 5.500h10" stroke="#000" /></I>
          <I w={11}><path d="M.5 2.500h8v8h-8zM2.500 2.500v-2h8v8h-2" stroke="#000" /></I>
          <I w={11}><path d="M.5.5l10 10M10.500.5l-10 10" stroke="#000" /></I>
        </WindowButtons>
      </TitleBar>
      <MenuBar>
        {menus.map(([m, w]) => {
          const [a, b, c] = m.split('|');
          return <Text key={m} $w={w} $ls={-0.3}>{a}<u>{b}</u>{c}</Text>;
        })}
      </MenuBar>
      <ToolBar $top="#d0d0d0">
        <Grip w={12.5} pr={1.5} />
        <Tools names="newp open save layout manager style" />
        <Grip w={16} pr={2} />
        <Tool name="pan" on />
        <Tools names="pansel zin zout zfull zsel zlayer znat! zlast znext! book book2 book3" />
        <Slot><Refresh /></Slot>
        <Grip w={15} pr={0.5} />
        <Tools names="ident action!" /><Drop w={14} off />
        <Tool name="select" /><Drop w={12} />
        <Tool name="selval" /><Drop w={12} />
        <Tools names="desel" /><Tool name="table" w={32} />
        <Tools names="abacus gear sigma ruler" /><Drop w={12} />
        <Tools names="tip text" /><Drop w={13} />
      </ToolBar>
      <ToolBar $top="#b8b8b8">
        <Grip w={12.5} pr={1.5} />
        <Tools names="dsm geo vnew feather chip" />
        <Slot $w={7}><I w={1} h={20}><path d="M.5 0v20" stroke="#ccc" /></I></Slot>
        <Tool name="virt" />
        <Grip w={18} pr={4} />
        <Tool name="pencils!" w={31} />
        <Tools names="pencil saveedit! addpoly! vertex!" /><Drop w={12} off />
        <Tools names="modify! trash! cut! copy! paste! undo! redo!" />
        <Grip w={14} pr={0} />
        <Tool name="abc" w={35} />
        <Tools names="pie hilite pin! show! move! rot! chg!" />
        <Grip w={16} pr={2} />
        <Tool name="meta" />
        <Grip w={16} pr={2} />
        <Slot><Python s={22} prompt /></Slot>
        <Grip w={16} pr={2} />
        <Tool name="help" />
        <Grip w={14} />
      </ToolBar>
      <Body>
        <Docks>
          <TopRule />
          <BrowserPanel />
          <HSplit><DotLine /></HSplit>
          <LayersPanel />
        </Docks>
        <Splitter><DotLine $v /></Splitter>
        <CanvasWrap>
          <Canvas>
            <svg width="1064" height="577" viewBox="301 122 1064 577">
              <path d="M990 124v549H578z" fill="#e15989" stroke="#2b1a20" strokeWidth="1" />
            </svg>
          </Canvas>
        </CanvasWrap>
      </Body>
      <StatusBar>
        <Field $w={200} $h={22} $pl={8}>
          <I w={13}><circle cx="5" cy="5" r="4" stroke="#888" strokeWidth="1.200" /><path d="M8 8l4.500 4.500" stroke="#888" strokeWidth="1.500" /></I>
          <Lead $ml={6}><Text $c="#777">Type to locate (Ctrl+K)</Text></Lead>
        </Field>
        <Lead $ml={7}><Text $w={379}>Ready</Text></Lead>
        <Text $w={57}>Coordinate</Text>
        <Field $w={74} $pl={8}><Text>10.34,2.73</Text></Field>
        <Lead $ml={4}><I w={16}><path d="M1 4l5-3 6 6-2 4zM3 2l6 8M6 1l-3 5M9 4L5 8" stroke="#333" strokeWidth="1.200" /><circle cx="10" cy="11.500" r="3.500" fill="#fff" stroke="#333" /><path d="M12 4l2-2M13 7l2.500-1M8 14l4-4" stroke="#333" /></I></Lead>
        <Lead $ml={12}><Text $w={29}>Scale</Text></Lead>
        <Field $w={80} $pl={3}><Text>1:8444872</Text><FieldEnd $w={20}><Tri w={8} c="#666" /></FieldEnd></Field>
        <Lead $ml={12}><I w={14} h={16}><path d="M3.500 8V5a3.500 3.500 0 0 1 7 0v3" stroke="#8a8a8a" strokeWidth="1.800" /><rect x="1" y="7" width="12" height="8" rx="1" fill="#666" /></I></Lead>
        <Lead $ml={7}><Text $w={48}>Magnifier</Text></Lead>
        <Field $w={88}><Text>100%</Text><Spin /></Field>
        <Lead $ml={8}><Text $w={51}>Rotation</Text></Lead>
        <Field $w={84}><Text>0,0 °</Text><Spin /></Field>
        <Lead $ml={6}><Check><I w={10}><path d="M1.500 4.500L4 8.500 8.500.8" stroke="#000" strokeWidth="1.800" /></I></Check></Lead>
        <Lead $ml={4}><Text $w={54}>Render</Text></Lead>
        <I w={14}><path d="M7 0l7 7-7 7-7-7z" fill={gray} /><circle cx="7" cy="7" r="5.800" fill={gray} /><path d="M1 5h12M1 9h12M7 1v12M4.500 2q-2 5 0 10M9.500 2q2 5 0 10" stroke="#e6e6e6" strokeWidth=".7" /></I>
        <Lead $ml={4}><Text $w={73}>EPSG:4326</Text></Lead>
        <I w={16}><path d="M8 1.500c4 0 7.500 2 7.500 5.500 0 2.500-1.500 4-3 4.800L14 15l-5-3C4 12.500.5 10.500.5 7S4 1.500 8 1.500z" fill="#666" /><path d="M3.500 6h2v2h-2zM7 6h2v2H7zM10.500 6h2v2h-2z" fill="#ddd" /></I>
      </StatusBar>
      <TaskBar>
        <Start><I w={16}><path d="M0 2.300l6.700-1v6.200H0zM7.600 1.200L16 0v7.500H7.600zM0 8.400h6.700v6.300L0 13.700zM7.600 8.400H16V16l-8.400-1.200z" fill="#fff" /></I></Start>
        <Search><I w={17}><circle cx="10.500" cy="6" r="5.200" stroke="#222" strokeWidth="1.300" /><path d="M6.700 9.800L.8 16" stroke="#222" strokeWidth="1.400" /></I><Text $ls={-0.52}>Type here to search</Text></Search>
        <Task><I w={20} h={16}><path d="M1.500.5v3h9.500v-3M1.500 15.500v-3h9.500v3M1.500 5.500h9.500v5H1.500zM15.500 0v16" stroke="#fff" strokeWidth="1.100" /><path d="M14 4.500h3v3h-3z" fill="#fff" /></I></Task>
        <Task><I w={21}><path d="M.8 9.500C2 3 6.500.5 11 .5c6 0 9.500 4.500 9.500 10v2H7.300c.3 3 2.700 4.500 6 4.500 2.200 0 4.200-.6 5.700-1.600v4.200c-1.700.9-4 1.400-6.500 1.400-6 0-9.500-3.500-9.500-8C3 10 5 7.500 8 6.300 7.500 7.200 7.200 8 7.200 9h7.600c0-3-1.500-4.600-5-4.600S3 6.200.8 9.500z" fill="#0f7bdc" /></I></Task>
        <Task $run><I w={22} h={18}><path d="M0 0h8l2 2h12v3H0z" fill="#e9b440" /><path d="M0 4h22v14H0z" fill="#fcdb7c" /><path d="M4 18v-7h14v7h-4v-3H8v3z" fill="#3a97dc" /></I></Task>
        <Task><I w={24}><path d="M8 6V3q0-2 2-2h4q2 0 2 2v3" stroke="#fff" strokeWidth="1.400" /><path d="M1 6h22v15q0 2-2 2H3q-2 0-2-2z" fill="#fff" /><path d="M7 9h4.600v5H7z" fill="#f25022" /><path d="M12.400 9H17v5h-4.600z" fill="#7fba00" /><path d="M7 14.800h4.600v5H7z" fill="#00a4ef" /><path d="M12.400 14.800H17v5h-4.600z" fill="#ffb900" /></I></Task>
        <Task><I w={24} h={20}><path d="M0 5.500L12 0l12 5.500V20H0z" fill="#fff" /><path d="M1 6.500h21L13 14.500l4.500 2.500-6-3.500z" fill="#2c292b" /></I></Task>
        <Task $run><I w={22}><path d="M11 0v22M1 8l20 6M2 16L20 6M5.500 2l11 18M16.500 2l-11 18" stroke="#bbb" strokeWidth=".9" /><path d="M11 2.500l6.500 2.500 2 6-2.500 6-6 2.500-6-2.500-2.500-6 2.500-6zM11 6.500l3.500 1.500 1.300 3-1.300 3.300-3.500 1.500-3.500-1.500L6.200 11l1.300-3z" stroke="#eee" strokeWidth="1.200" /><path d="M2.500 12c2.500-3 4.500-3.500 6.500-1s4 2.500 5.500 0 3.500-2.500 5-1.500" stroke="#e8151b" strokeWidth="2.400" /></I></Task>
        <Task $run><I w={23} h={19}><rect x=".7" y=".7" width="21.600" height="17.600" rx="1" fill="#3a3b3c" stroke="#a9abac" strokeWidth="1.300" /><text x="3" y="8" fontSize="5.500" fontFamily="DejaVu Sans Mono" fill="#aaa">C:\_</text></I></Task>
        <Task $run><I w={23} h={19}><rect x=".5" y=".5" width="22" height="18" fill="#000" stroke="#999" /><path d="M1 1.500h21" stroke="#bcd" strokeWidth="2" /><text x="3" y="9" fontSize="6" fontWeight="700" fontFamily="DejaVu Sans Mono" fill="#ddd" textLength="17">C:\_</text></I></Task>
        <Task $run><I w={22} vb="0 0 24 24"><circle cx="12" cy="12" r="11.500" fill="#fdd03b" /><path d="M12 12L2 6.200A11.500 11.500 0 0 1 22 6.200H12z" fill="#e33b2e" /><path d="M2 6.200A11.500 11.500 0 0 0 11 23.500l5-8.700-4-2.800z" fill="#2ba24c" /><path d="M22 6.200H12L17 15l-5.500 8.500A11.500 11.500 0 0 0 22 6.200z" fill="#fdd03b" /><circle cx="12" cy="12" r="5.500" fill="#fff" /><circle cx="12" cy="12" r="4.300" fill="#4285f4" /></I></Task>
        <Task $active><QLogo s={24} /></Task>
        <Tray>
          <I w={12} h={7}><path d="M.7 6.300L6 1l5.300 5.300" stroke="#fff" strokeWidth="1.300" /></I>
          <Lead $ml={12}><I w={15} h={9}><path d="M.5.500h12.500v8H.5z" stroke="#fff" /><path d="M2.500 2.500h7v4h-7zM13.500 3h1.500v3h-1.500z" fill="#fff" /></I></Lead>
          <Lead $ml={10}><I w={14}><path d="M1 13A12 12 0 0 1 13 1.500" stroke="#888" strokeWidth="1.200" /><path d="M3.500 13A9.500 9.500 0 0 1 13 4M6.500 13A6.500 6.500 0 0 1 13 7" stroke="#fff" strokeWidth="1.200" /><path d="M9 13a4 4 0 0 1 4-3.500" stroke="#fff" strokeWidth="1.200" /><circle cx="12" cy="12.500" r="1.300" fill="#fff" /></I></Lead>
          <Lead $ml={7}><I w={17} h={13}><path d="M.5 4.500H3l3.500-3.500v11L3 8.500H.5z" stroke="#fff" /><path d="M8.500 4.500q1.500 2 0 4" stroke="#fff" /><path d="M11 3q2.500 3.500 0 7M13.500 1.500q3.500 5 0 10" stroke="#8a8889" /></I></Lead>
          <Clock><Text $ls={-0.6}>16:37</Text><Text $ls={-0.5}>23/10/2019</Text></Clock>
          <I w={26} h={26}><path d="M2 3h16v12h-9l-3.500 3.500V15H2z" fill="#fff" /><path d="M5 6h10M5 9h10M5 12h6" stroke="#2c292b" strokeWidth="1.200" /><circle cx="17" cy="17" r="8" fill="#3c3a3b" stroke="#8e8c8d" /><text x="13.600" y="21.200" fontSize="12" fontWeight="700" fontFamily="Open Sans" fill="#fff">2</text></I>
          <ShowDesk />
        </Tray>
      </TaskBar>
    </Window>
  );
}
